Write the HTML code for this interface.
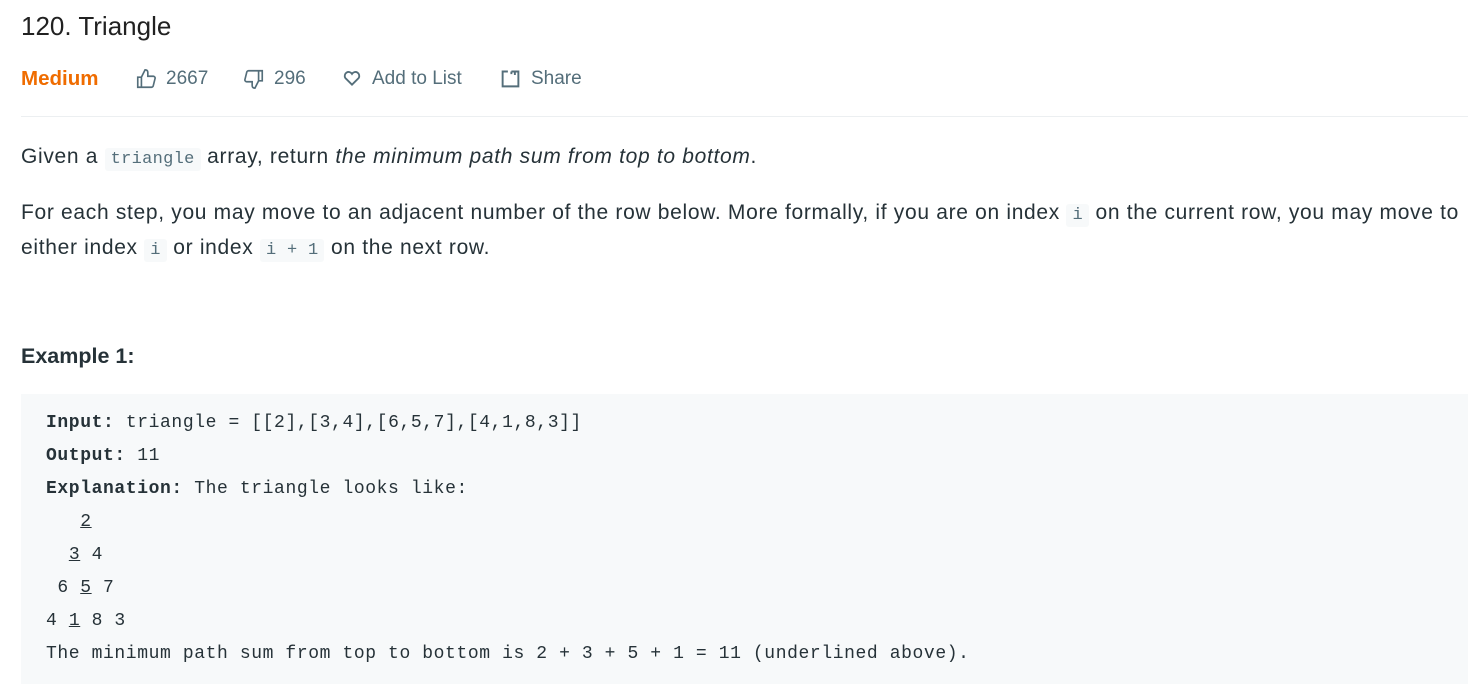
<!DOCTYPE html>
<html><head><meta charset="utf-8"><style>
body{margin:0;background:#fff;font-family:"Liberation Sans",sans-serif;color:#263238;width:1468px;height:684px;overflow:hidden;position:relative}
.t{position:absolute;left:21px;top:11px;font-size:26px;color:#212121}
.meta{position:absolute;top:67px;height:24px;display:flex;align-items:center;font-size:19px;color:#546e7a;white-space:nowrap}
.med{color:#ef6c00;font-weight:bold;font-size:20.5px}
.meta svg{position:absolute;left:0;top:1px}
hr{position:absolute;left:21px;top:116px;width:1447px;margin:0;border:0;border-top:1px solid #eceff1}
p{position:absolute;left:21px;margin:0;font-size:21px;letter-spacing:0.68px;line-height:32px;white-space:nowrap;color:#263238}
code{font-family:"Liberation Mono",monospace;font-size:17px;letter-spacing:0.3px;color:#546e7a;background:#f7f9fa;border-radius:3px;padding:2px 6px}
h4{position:absolute;left:21px;top:344px;margin:0;font-size:21.5px;font-weight:bold}
pre{position:absolute;left:21px;top:394px;width:1447px;height:290px;margin:0;background:#f7f9fa;box-sizing:border-box;padding:13px 25px;font-family:"Liberation Mono",monospace;font-size:18px;letter-spacing:0.6px;line-height:33px;color:#263238}
pre b{font-weight:bold}
</style></head><body>
<div class="t">120. Triangle</div>
<div class="meta med" style="left:21px">Medium</div>
<div class="meta" style="left:135px"><svg width="22" height="22" viewBox="0 0 24 24" fill="none" stroke="#546e7a" stroke-width="1.8"><path d="M3 10h4v11H3z M7 10l4-8c2 0 3 1 3 3v4h6c1 0 2 1 2 2l-2 8c0 1-1 2-2 2H7"/></svg><span style="margin-left:31px">2667</span></div>
<div class="meta" style="left:243px"><svg width="22" height="22" viewBox="0 0 24 24" fill="none" stroke="#546e7a" stroke-width="1.8"><path d="M21 14h-4V3h4z M17 14l-4 8c-2 0-3-1-3-3v-4H4c-1 0-2-1-2-2l2-8c0-1 1-2 2-2h11"/></svg><span style="margin-left:31px">296</span></div>
<div class="meta" style="left:342px"><svg width="20" height="20" viewBox="0 0 24 24" fill="none" stroke="#546e7a" stroke-width="2.2"><path d="M12 20l-8-8a4.5 4.5 0 0 1 8-5a4.5 4.5 0 0 1 8 5z"/></svg><span style="margin-left:30px">Add to List</span></div>
<div class="meta" style="left:500px"><svg width="21" height="21" viewBox="0 0 24 24" fill="none" stroke="#546e7a" stroke-width="2.2"><path d="M9 4H3v17h18v-17h-4 M13 4v3 M13 4h4v4"/></svg><span style="margin-left:31px">Share</span></div>
<hr>
<p style="top:141px">Given a <code>triangle</code> array, return <i>the minimum path sum from top to bottom</i>.</p>
<p style="top:197px">For each step, you may move to an adjacent number of the row below. More formally, if you are on index <code>i</code> on the current row, you may move to<br>either index <code>i</code> or index <code>i + 1</code> on the next row.</p>
<h4>Example 1:</h4>
<pre><b>Input:</b> triangle = [[2],[3,4],[6,5,7],[4,1,8,3]]
<b>Output:</b> 11
<b>Explanation:</b> The triangle looks like:
   <u>2</u>
  <u>3</u> 4
 6 <u>5</u> 7
4 <u>1</u> 8 3
The minimum path sum from top to bottom is 2 + 3 + 5 + 1 = 11 (underlined above).</pre>
</body></html>
